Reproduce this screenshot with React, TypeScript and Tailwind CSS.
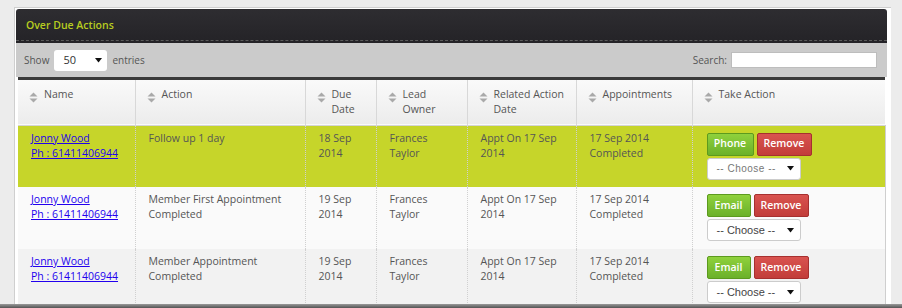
import React from 'react';

const font = { fontFamily: '"Open Sans", "DejaVu Sans", sans-serif' };

function SortIcon() {
  return (
    <svg width="9" height="11" viewBox="0 0 9 11" className="shrink-0 mt-[5px]">
      <path d="M4.5 0.5 L8.5 4.5 L0.5 4.5 Z" fill="#a9a9a9" />
      <path d="M0.5 6.5 L8.5 6.5 L4.5 10.5 Z" fill="#a9a9a9" />
    </svg>
  );
}

function Head({ children }: { children: React.ReactNode }) {
  return (
    <th className="border-r border-[#d8d8d8] last:border-r-0 align-top pl-[11px] pr-1 pt-[7px] pb-0 font-normal text-left whitespace-nowrap">
      <div className="flex gap-[6px] text-[#555] leading-[15px]">
        <SortIcon />
        <span>{children}</span>
      </div>
    </th>
  );
}

function Cell({ children }: { children: React.ReactNode }) {
  return (
    <td className="border-r border-dotted border-[#d0d0d0] align-top px-[13px] pt-[5px] leading-[15px] text-[#555]">
      {children}
    </td>
  );
}

function Chooser({ light }: { light?: boolean }) {
  return (
    <div className="mt-[2px] flex items-center justify-between w-[94px] h-[22px] bg-white rounded-[3px] border border-[#ccc] pl-[9px] pr-[6px]">
      <span className={light ? 'text-[#777] text-[10px] tracking-[0.5px]' : 'text-[#444] text-[11px]'} style={{ fontFamily: '"Liberation Sans", Arial, sans-serif' }}>
        -- Choose --
      </span>
      <svg width="7" height="5" viewBox="0 0 7 5"><path d="M0 0 L7 0 L3.5 4.5 Z" fill="#111" /></svg>
    </div>
  );
}

const rows = [
  { action: 'Follow up 1 day', due: ['18 Sep', '2014'], btn: 'Phone', bg: 'bg-[#c6d52a]', light: true },
  { action: 'Member First Appointment Completed', due: ['19 Sep', '2014'], btn: 'Email', bg: 'bg-[#fafafa]' },
  { action: 'Member Appointment Completed', due: ['19 Sep', '2014'], btn: 'Email', bg: 'bg-[#f2f2f2]' },
];

export default function App() {
  return (
    <div className="w-[902px] h-[308px] overflow-hidden bg-[#ececec] relative" style={font}>
      <div className="absolute left-[14px] top-[7px] w-[877px] h-[301px] bg-white border-l border-t border-[#cfcfcf]">
        <div className="ml-[1px] mt-[1px] w-[871px]">
          {/* header bar */}
          <div className="h-[34px] bg-gradient-to-b from-[#2e2d31] to-[#242327] rounded-t-[3px] relative">
            <div className="pl-[10px] pt-[9px] text-[10.5px] font-semibold text-[#b8cc20]">Over Due Actions</div>
            <div className="absolute left-0 right-0 bottom-[2px] border-b border-dashed border-[#5a5a5a]" />
          </div>
          {/* toolbar */}
          <div className="h-[34px] bg-[#cbcbcb] flex items-center justify-between px-[8px] text-[10px] text-[#555]">
            <div className="flex items-center gap-[5px]">
              <span>Show</span>
              <div className="w-[53px] h-[21px] bg-white rounded-[3px] flex items-center justify-between pl-[9px] pr-[5px] text-[#333] text-[11px]">
                <span>50</span>
                <svg width="7" height="5" viewBox="0 0 7 5"><path d="M0 0 L7 0 L3.5 4.5 Z" fill="#111" /></svg>
              </div>
              <span>entries</span>
            </div>
            <div className="flex items-center gap-[4px] mr-[2px]">
              <span>Search:</span>
              <div className="w-[146px] h-[16px] bg-white border border-[#bdbdbd]" />
            </div>
          </div>
          <div className="h-[3px] bg-[#3a3a3a] ml-[2px] mr-[2px]" />
          <table className="ml-[2px] border-collapse text-[10.5px] table-fixed" style={{ width: 867 }}>
            <colgroup>
              <col style={{ width: 117 }} />
              <col style={{ width: 170 }} />
              <col style={{ width: 71 }} />
              <col style={{ width: 91 }} />
              <col style={{ width: 109 }} />
              <col style={{ width: 116 }} />
              <col style={{ width: 193 }} />
            </colgroup>
            <thead>
              <tr className="h-[45px] bg-gradient-to-b from-[#fafafa] to-[#ececec] border-b border-[#d5d5d5]">
                <Head>Name</Head>
                <Head>Action</Head>
                <Head>Due<br />Date</Head>
                <Head>Lead<br />Owner</Head>
                <Head>Related Action<br />Date</Head>
                <Head>Appointments</Head>
                <Head>Take Action</Head>
              </tr>
            </thead>
            <tbody>
              {rows.map((r, i) => (
                <tr key={i} className={`${r.bg} h-[62px]`}>
                  <Cell>
                    <a className="text-[#2200ee] underline">Jonny Wood</a>
                    <br />
                    <a className="text-[#2200ee] underline">Ph : 61411406944</a>
                  </Cell>
                  <Cell>{r.action}</Cell>
                  <Cell>{r.due[0]}<br />{r.due[1]}</Cell>
                  <Cell>Frances<br />Taylor</Cell>
                  <Cell>Appt On 17 Sep<br />2014</Cell>
                  <Cell>17 Sep 2014<br />Completed</Cell>
                  <td className="align-top px-[14px] pt-[7px] border-r border-[#cfcfcf]">
                    <div className="flex gap-[3px]">
                      <div className={`h-[23px] ${r.btn === 'Phone' ? 'w-[47px]' : 'w-[44px]'} flex items-center justify-center rounded-[2px] border border-[#5c9a1e] bg-gradient-to-b from-[#8fd13c] to-[#6bb12a] text-white text-[10.5px] font-semibold`}>
                        {r.btn}
                      </div>
                      <div className="h-[23px] w-[55px] flex items-center justify-center rounded-[2px] border border-[#a6302f] bg-gradient-to-b from-[#d9534f] to-[#c23d3a] text-white text-[10.5px] font-semibold">
                        Remove
                      </div>
                    </div>
                    <Chooser light={r.light} />
                  </td>
                </tr>
              ))}
            </tbody>
          </table>
        </div>
      </div>
      <div className="absolute left-0 right-0 bottom-0 h-[4px] bg-gradient-to-b from-[#9a9a9a] to-[#555]" />
    </div>
  );
}
